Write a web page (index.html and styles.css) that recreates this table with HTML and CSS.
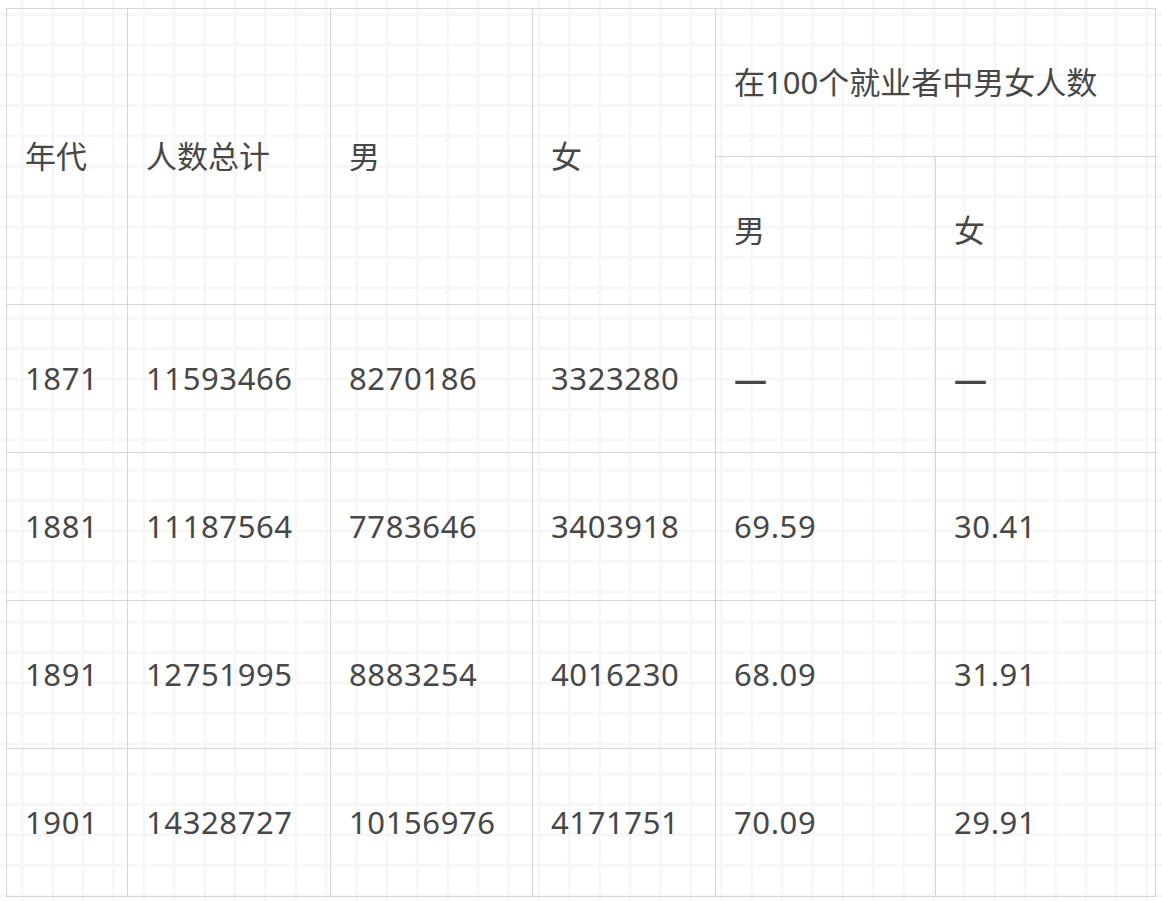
FILE: index.html
```html
<!DOCTYPE html>
<html lang="zh-CN">
<head>
<meta charset="utf-8">
<title>就业者人数</title>
<link rel="stylesheet" href="styles.css">
</head>
<body>
<table class="data">
  <colgroup>
    <col class="c1"><col class="c2"><col class="c3"><col class="c4"><col class="c5"><col class="c6">
  </colgroup>
  <thead>
    <tr>
      <th rowspan="2">年代</th>
      <th rowspan="2">人数总计</th>
      <th rowspan="2">男</th>
      <th rowspan="2">女</th>
      <th colspan="2">在100个就业者中男女人数</th>
    </tr>
    <tr>
      <th>男</th>
      <th>女</th>
    </tr>
  </thead>
  <tbody>
    <tr><td>1871</td><td>11593466</td><td>8270186</td><td>3323280</td><td class="dash">—</td><td class="dash">—</td></tr>
    <tr><td>1881</td><td>11187564</td><td>7783646</td><td>3403918</td><td>69.59</td><td>30.41</td></tr>
    <tr><td>1891</td><td>12751995</td><td>8883254</td><td>4016230</td><td>68.09</td><td>31.91</td></tr>
    <tr><td>1901</td><td>14328727</td><td>10156976</td><td>4171751</td><td>70.09</td><td>29.91</td></tr>
  </tbody>
</table>
</body>
</html>
```

FILE: styles.css
```css
html, body {
  margin: 0;
  padding: 0;
}
body {
  width: 1162px;
  height: 901px;
  background-color: #ffffff;
  background-image:
    linear-gradient(to right, transparent 0, transparent 21px, #fafafa 21px, #f5f5f5 22px, #f5f5f5 23px, #fafafa 24px, transparent 24px),
    linear-gradient(to bottom, transparent 0, transparent 13px, #fafafa 13px, #f5f5f5 14px, #f5f5f5 15px, #fafafa 16px, transparent 16px);
  background-size: 30.4px 30.4px;
  background-position: 0 0;
  font-family: "Noto Sans", "Noto Sans CJK SC", sans-serif;
  color: #474747;
  overflow: hidden;
}
.data {
  margin: 8px 0 0 6px;
  width: 1150px;
  border-collapse: collapse;
  table-layout: fixed;
  font-size: 31px;
}
.c1 { width: 121px; }
.c2 { width: 203px; }
.c3 { width: 202px; }
.c4 { width: 183px; }
.c5 { width: 220px; }
.c6 { width: 220px; }
.data th,
.data td {
  border: 1px solid #d6d6d6;
  padding: 0 0 0 18px;
  height: 147px;
  text-align: left;
  vertical-align: middle;
  font-weight: normal;
  white-space: nowrap;
  line-height: 1.2;
}
.data td {
  letter-spacing: 0.6px;
}
.data .dash {
  font-family: "Noto Sans", sans-serif;
  letter-spacing: 0;
  font-weight: 600;
  font-size: 33px;
}
```
